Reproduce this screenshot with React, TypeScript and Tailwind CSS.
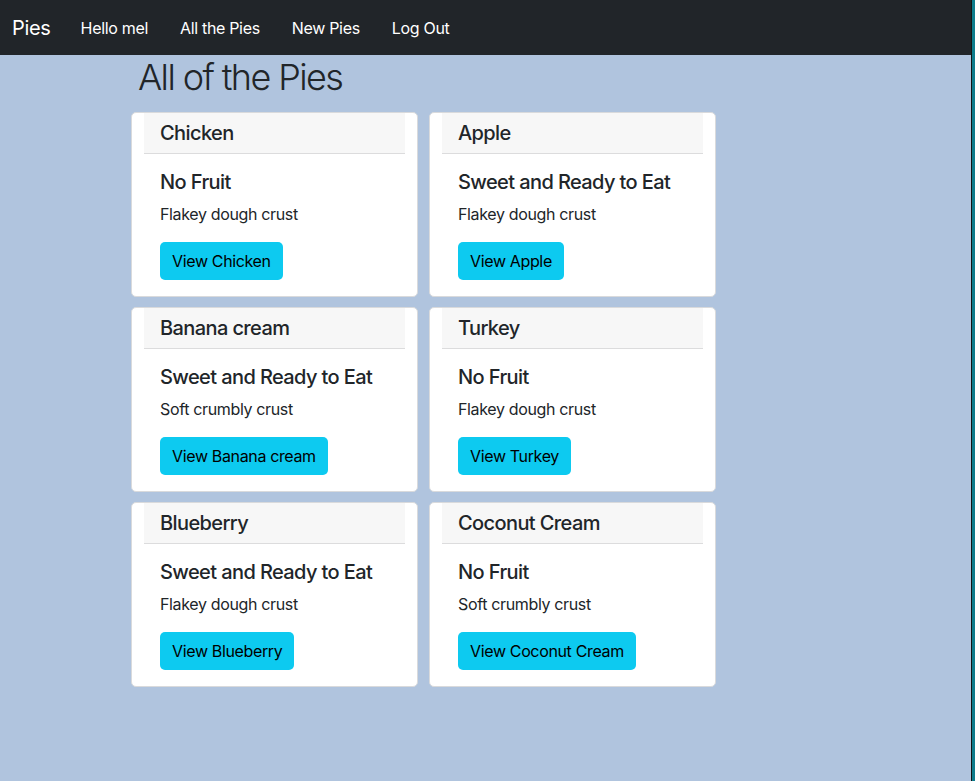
const pies = [
  { name: "Chicken", fruit: "No Fruit", crust: "Flakey dough crust" },
  { name: "Apple", fruit: "Sweet and Ready to Eat", crust: "Flakey dough crust" },
  { name: "Banana cream", fruit: "Sweet and Ready to Eat", crust: "Soft crumbly crust" },
  { name: "Turkey", fruit: "No Fruit", crust: "Flakey dough crust" },
  { name: "Blueberry", fruit: "Sweet and Ready to Eat", crust: "Flakey dough crust" },
  { name: "Coconut Cream", fruit: "No Fruit", crust: "Soft crumbly crust" },
];

function PieCard({ pie }: { pie: (typeof pies)[number] }) {
  return (
    <div className="bg-white border border-[#d9dadc] rounded-[5px] px-3">
      <div className="bg-[#f7f7f7] border-b border-[#dcdcdd] px-4 py-2 text-[20px] font-medium leading-[1.2] tracking-[-0.03em]">
        {pie.name}
      </div>
      <div className="p-4">
        <h5 className="text-[20px] font-medium leading-[1.2] tracking-[-0.03em] mb-2">
          {pie.fruit}
        </h5>
        <p className="text-[16px] leading-6 tracking-[-0.022em] mb-4">{pie.crust}</p>
        <button className="bg-[#0dcaf0] text-black text-[16px] leading-6 tracking-[-0.022em] px-3 py-[7px] rounded-[5px]">
          View {pie.name}
        </button>
      </div>
    </div>
  );
}

export default function App() {
  return (
    <div
      className="flex h-[781px] text-[#212529]"
      style={{ fontFamily: "Inter, 'Liberation Sans', sans-serif" }}
    >
      <div className="w-[971px] bg-[#b0c4de] flex flex-col">
        <nav className="h-[55px] bg-[#212529] flex items-center px-3 text-white tracking-[-0.02em]">
          <span className="text-[20px] mr-[14px]">Pies</span>
          <a className="px-4 text-[16px]">Hello mel</a>
          <a className="px-4 text-[16px]">All the Pies</a>
          <a className="px-4 text-[16px]">New Pies</a>
          <a className="px-4 text-[16px]">Log Out</a>
        </nav>
        <h1 className="ml-[138px] text-[36px] font-light leading-[44px] tracking-[-0.045em] mb-[13px]">
          All of the Pies
        </h1>
        <div className="ml-[131px] grid grid-cols-[287px_287px] gap-x-[11px] gap-y-[10px]">
          {pies.map((p) => (
            <PieCard key={p.name} pie={p} />
          ))}
        </div>
      </div>
      <div className="w-[1px] bg-[#151515]" />
      <div className="flex-1 bg-[#0e7c8c]" />
    </div>
  );
}
